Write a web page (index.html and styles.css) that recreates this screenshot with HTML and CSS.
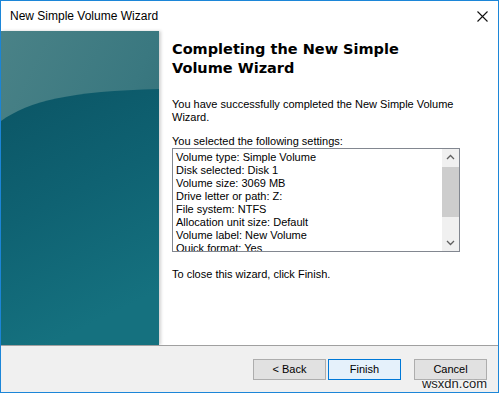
FILE: index.html
```html
<!DOCTYPE html>
<html lang="en">
<head>
    <meta charset="UTF-8">
    <title>New Simple Volume Wizard</title>
    <link rel="stylesheet" href="styles.css">
</head>
<body>
    <div class="window">
        <div class="titlebar">
            <span class="title">New Simple Volume Wizard</span>
            <svg class="close" width="11" height="11" viewBox="0 0 11 11">
                <path d="M0.5 0.5 L10.5 10.5 M10.5 0.5 L0.5 10.5" stroke="#111" stroke-width="1.1" fill="none"/>
            </svg>
        </div>

        <div class="main">
            <div class="banner">
                <svg width="158" height="314" viewBox="0 0 158 314">
                    <defs>
                        <linearGradient id="topGrad" x1="0" y1="0" x2="1" y2="1">
                            <stop offset="0" stop-color="#4a8287"/>
                            <stop offset="0.5" stop-color="#3a7880"/>
                            <stop offset="1" stop-color="#2a6670"/>
                        </linearGradient>
                        <linearGradient id="lowGrad" x1="0" y1="0" x2="0.3" y2="1">
                            <stop offset="0" stop-color="#0b5565"/>
                            <stop offset="0.5" stop-color="#0f6272"/>
                            <stop offset="1" stop-color="#15717f"/>
                        </linearGradient>
                    </defs>
                    <rect width="158" height="314" fill="url(#topGrad)"/>
                    <path d="M0 90 C28 70 70 60 158 58 L158 314 L0 314 Z" fill="url(#lowGrad)"/>
                </svg>
            </div>

            <div class="content">
                <h1>Completing the New Simple Volume Wizard</h1>
                <p class="intro">You have successfully completed the New Simple Volume Wizard.</p>
                <p class="label">You selected the following settings:</p>

                <div class="listbox">
                    <div class="list-lines">
                        <div>Volume type: Simple Volume</div>
                        <div>Disk selected: Disk 1</div>
                        <div>Volume size: 3069 MB</div>
                        <div>Drive letter or path: Z:</div>
                        <div>File system: NTFS</div>
                        <div>Allocation unit size: Default</div>
                        <div>Volume label: New Volume</div>
                        <div>Quick format: Yes</div>
                    </div>
                    <div class="scrollbar">
                        <svg class="arrow" width="17" height="17" viewBox="0 0 17 17">
                            <path d="M5 10 L8.5 6.5 L12 10" stroke="#606060" stroke-width="1.3" fill="none"/>
                        </svg>
                        <div class="track"><div class="thumb"></div></div>
                        <svg class="arrow" width="17" height="17" viewBox="0 0 17 17">
                            <path d="M5 7 L8.5 10.5 L12 7" stroke="#606060" stroke-width="1.3" fill="none"/>
                        </svg>
                    </div>
                </div>

                <p class="outro">To close this wizard, click Finish.</p>
            </div>
        </div>

        <div class="footer">
            <button class="button">&lt; Back</button>
            <button class="button default">Finish</button>
            <button class="button cancel">Cancel</button>
            <span class="watermark">wsxdn.com</span>
        </div>
    </div>
</body>
</html>
```

FILE: styles.css
```css
body {
    margin: 0;
    font-family: "Liberation Sans", Arial, sans-serif;
    font-size: 11px;
    color: #000;
    background: #fff;
}
.window {
    position: relative;
    width: 499px;
    height: 393px;
    box-sizing: border-box;
    border: 1px solid #1c86d8;
    display: flex;
    flex-direction: column;
    background: #fff;
}
.titlebar {
    height: 30px;
    display: flex;
    align-items: center;
    justify-content: space-between;
    padding: 0 10px 0 9px;
    background: #fff;
}
.title {
    font-family: "Liberation Sans", Arial, sans-serif;
    font-size: 12px;
    color: #000;
}
.main {
    height: 314px;
    display: flex;
}
.banner {
    width: 158px;
    height: 314px;
    box-shadow: 2px 0 3px rgba(0,0,0,0.18);
}
.banner svg {
    display: block;
}
.content {
    flex: 1;
    padding: 9px 0 0 13px;
}
h1 {
    font-family: "DejaVu Sans", Verdana, sans-serif;
    font-weight: bold;
    font-size: 14.5px;
    line-height: 19px;
    width: 270px;
    margin: 0 0 20px 0;
}
p {
    margin: 0;
    line-height: 13px;
}
.intro {
    width: 290px;
}
.label {
    margin-top: 11px;
}
.listbox {
    margin-top: 0;
    width: 288px;
    height: 104px;
    box-sizing: border-box;
    border: 1px solid #828790;
    display: flex;
    overflow: hidden;
}
.list-lines {
    flex: 1;
    padding: 2px 0 0 3px;
    line-height: 13px;
    overflow: hidden;
}
.scrollbar {
    width: 17px;
    background: #f0f0f0;
    display: flex;
    flex-direction: column;
}
.arrow {
    display: block;
}
.track {
    flex: 1;
    padding-top: 1px;
}
.thumb {
    height: 50px;
    background: #cdcdcd;
}
.outro {
    margin-top: 16px;
}
.footer {
    flex: 1;
    border-top: 1px solid #a0a0a0;
    background: #f0f0f0;
    display: flex;
    align-items: center;
    justify-content: flex-end;
    padding-right: 11px;
}
.button {
    width: 73px;
    height: 21px;
    margin-left: 2px;
    background: #e1e1e1;
    border: 1px solid #adadad;
    font-family: "Liberation Sans", Arial, sans-serif;
    font-size: 11px;
    color: #000;
    padding: 0;
}
.default {
    background: #e5f1fb;
    border-color: #0078d7;
}
.cancel {
    margin-left: 13px;
}
.watermark {
    position: absolute;
    right: 11px;
    bottom: 1px;
    font-family: "Liberation Sans", Arial, sans-serif;
    font-size: 13px;
    color: #222;
    text-shadow: 0 0 2px #fff, 0 0 2px #fff;
}
```
